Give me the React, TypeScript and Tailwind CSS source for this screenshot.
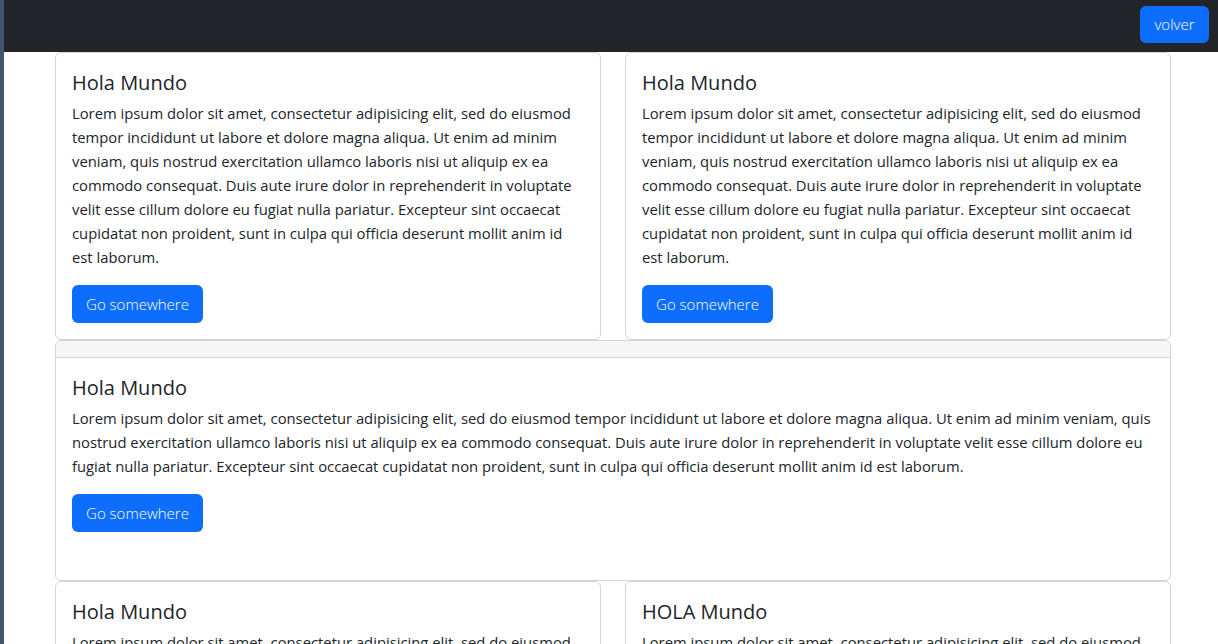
const LOREM_SMALL = [
  "Lorem ipsum dolor sit amet, consectetur adipisicing elit, sed do eiusmod",
  "tempor incididunt ut labore et dolore magna aliqua. Ut enim ad minim",
  "veniam, quis nostrud exercitation ullamco laboris nisi ut aliquip ex ea",
  "commodo consequat. Duis aute irure dolor in reprehenderit in voluptate",
  "velit esse cillum dolore eu fugiat nulla pariatur. Excepteur sint occaecat",
  "cupidatat non proident, sunt in culpa qui officia deserunt mollit anim id",
  "est laborum.",
];

const LOREM_WIDE = [
  "Lorem ipsum dolor sit amet, consectetur adipisicing elit, sed do eiusmod tempor incididunt ut labore et dolore magna aliqua. Ut enim ad minim veniam, quis",
  "nostrud exercitation ullamco laboris nisi ut aliquip ex ea commodo consequat. Duis aute irure dolor in reprehenderit in voluptate velit esse cillum dolore eu",
  "fugiat nulla pariatur. Excepteur sint occaecat cupidatat non proident, sunt in culpa qui officia deserunt mollit anim id est laborum.",
];

function CardBody({ title, lines, extra }: { title: string; lines: string[]; extra?: boolean }) {
  return (
    <div className={extra ? "px-4 pt-4 pb-12" : "p-4"}>
      <h5 className="mt-[2px] mb-[6px] text-[20px] leading-[24px] font-medium text-[#212529]">{title}</h5>
      <p className="mb-4 text-[14.8px] leading-[24px] text-[#212529]">
        {lines.map((l, i) => (
          <span key={i} className="block whitespace-nowrap">
            {l}
          </span>
        ))}
      </p>
      <button className="flex h-[38px] w-[131px] items-center justify-center rounded-[6px] bg-[#0d6efd] text-[15px] font-light text-white">
        Go somewhere
      </button>
    </div>
  );
}

export default function App() {
  return (
    <div className="flex min-h-screen bg-white font-['Open_Sans',sans-serif]">
      <div className="w-[4px] shrink-0 bg-[#44556b]" />
      <div className="min-w-0 flex-1">
        <nav className="flex h-[52px] items-start justify-end bg-[#212529] pt-[6px] pr-[9px]">
          <button className="h-[37px] w-[69px] rounded-[6px] bg-[#0d6efd] text-[15px] font-light text-white">volver</button>
        </nav>
        <div className="ml-[51px] w-[1116px]">
          <div className="grid grid-cols-2 gap-x-[24px]">
            <div className="rounded-[6px] border border-[#d4d4d4]">
              <CardBody title="Hola Mundo" lines={LOREM_SMALL} />
            </div>
            <div className="rounded-[6px] border border-[#d4d4d4]">
              <CardBody title="Hola Mundo" lines={LOREM_SMALL} />
            </div>
          </div>
          <div className="rounded-[6px] border border-[#d4d4d4]">
            <div className="h-[17px] rounded-t-[6px] border-b border-[#d4d4d4] bg-[#f7f7f7]" />
            <CardBody title="Hola Mundo" lines={LOREM_WIDE} extra />
          </div>
          <div className="grid grid-cols-2 gap-x-[24px]">
            <div className="rounded-[6px] border border-[#d4d4d4]">
              <CardBody title="Hola Mundo" lines={LOREM_SMALL} />
            </div>
            <div className="rounded-[6px] border border-[#d4d4d4]">
              <CardBody title="HOLA Mundo" lines={LOREM_SMALL} />
            </div>
          </div>
        </div>
      </div>
    </div>
  );
}
